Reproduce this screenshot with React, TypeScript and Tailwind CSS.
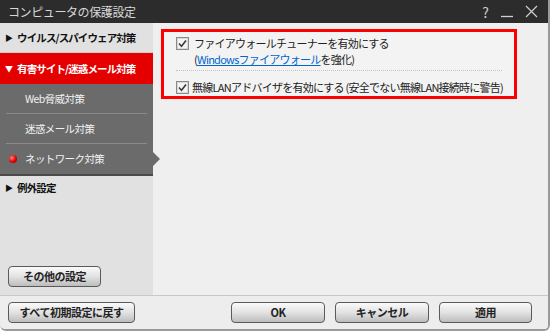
import type { ReactNode } from "react";

const jp = "font-['Noto_Sans_CJK_JP','Noto_Sans',sans-serif]";

// Checked box in the old Windows style
function CheckBox() {
	return (
		<svg width="13" height="13" viewBox="0 0 13 13" className="shrink-0">
			<rect x="0.5" y="0.5" width="12" height="12" fill="#f4f4f4" stroke="#8a8a8a" />
			<rect x="1.5" y="1.5" width="10" height="10" fill="none" stroke="#d8d8d8" />
			<path d="M3 6.5 L5.5 9.2 L10 3.5" fill="none" stroke="#3a3a3a" strokeWidth="1.6" />
		</svg>
	);
}

function Btn({ children, className }: { children: ReactNode; className?: string }) {
	return (
		<div
			className={`flex h-[21px] items-center justify-center whitespace-nowrap rounded-[4px] border border-[#5a5a5a] bg-gradient-to-b from-[#fafafa] via-[#e2e2e2] to-[#bdbdbd] text-[11px] font-bold tracking-[-0.5px] text-[#222] ${className ?? ""}`}
		>
			{children}
		</div>
	);
}

function SubItem({ label, dot, last }: { label: string; dot?: boolean; last?: boolean }) {
	return (
		<div className={`relative mx-[6px] flex h-[30px] items-center ${last ? "" : "border-b border-[#8a8a8a]"}`}>
			{dot && <span className="absolute left-[3px] h-[8px] w-[8px] rounded-full bg-[radial-gradient(circle_at_35%_35%,#ff8080,#e00000_55%,#900000)]" />}
			<span className="whitespace-nowrap pl-[19px] text-[10.5px] tracking-[-0.6px] text-[#f2f2f2]">{label}</span>
		</div>
	);
}

export default function App() {
	return (
		<div className={`flex h-[331px] w-[550px] flex-col overflow-hidden rounded-b-[6px] border-r-2 border-b-2 border-[#9a9a9a] bg-[#efefef] ${jp}`}>
			{/* Title bar */}
			<div className="flex h-[23px] shrink-0 items-center bg-[#2c2c2c] pl-[8px] pr-[10px]">
				<span className="text-[12px] tracking-[-0.4px] text-[#d8d8d8]">コンピュータの保護設定</span>
				<div className="ml-auto flex items-center gap-[12px] text-[#cfcfcf]">
					<span className="text-[14px] leading-none">?</span>
					<svg width="12" height="12" viewBox="0 0 12 12">
						<path d="M0 10.5 H12" stroke="#cfcfcf" strokeWidth="1.3" />
					</svg>
					<svg width="13" height="13" viewBox="0 0 13 13">
						<path d="M1 1 L12 12 M12 1 L1 12" stroke="#cfcfcf" strokeWidth="1.2" />
					</svg>
				</div>
			</div>

			{/* Main area */}
			<div className="flex flex-1">
				{/* Sidebar */}
				<div className="relative flex w-[153px] shrink-0 flex-col bg-[#e1e1e1]">
					<div className="flex h-[30px] items-center gap-[5px] whitespace-nowrap border-b border-[#cfcfcf] pl-[5px] text-[10.5px] font-bold tracking-[-0.9px] text-[#111]">
						<span className="text-[8px]">▶</span>
						<span>ウイルス/スパイウェア対策</span>
					</div>
					<div className="flex h-[31px] items-center gap-[5px] whitespace-nowrap bg-[#e50000] pl-[5px] text-[10.5px] font-bold tracking-[-0.9px] text-white">
						<span className="text-[8px]">▼</span>
						<span>有害サイト/迷惑メール対策</span>
					</div>
					<div className="relative border-b-2 border-[#4a4a4a] bg-[#6b6b6b]">
						<SubItem label="Web脅威対策" />
						<SubItem label="迷惑メール対策" />
						<SubItem label="ネットワーク対策" dot last />
						<span className="absolute right-[-7px] bottom-[8px] h-0 w-0 border-y-[7px] border-l-[7px] border-y-transparent border-l-[#6b6b6b]" />
					</div>
					<div className="flex h-[23px] items-center gap-[5px] pl-[5px] text-[10.5px] font-bold tracking-[-0.9px] text-[#111]">
						<span className="text-[8px]">▶</span>
						<span>例外設定</span>
					</div>
					<div className="mt-auto px-[8px] pb-[8px]">
						<Btn className="w-[93px]">その他の設定</Btn>
					</div>
				</div>

				{/* Content */}
				<div className="flex-1 pl-[8px] pt-[6px]">
					<div className="w-[356px] whitespace-nowrap border-[3px] border-[#ff0000] bg-[#f3f3f3] px-[12px] pt-[3px] pb-[1px] text-[11px] leading-[16px] tracking-[-0.75px] text-[#222]">
						<div className="flex items-start gap-[5px]">
							<div className="pt-[2px]">
								<CheckBox />
							</div>
							<div className="flex flex-col">
								<span>ファイアウォールチューナーを有効にする</span>
								<span>
									(<span className="text-[#0066cc] underline">Windowsファイアウォール</span>を強化)
								</span>
							</div>
						</div>
						<div className="mt-[3px] mb-[8px] border-t border-dotted border-[#c4c4c4]" />
						<div className="flex items-center gap-[3px]">
							<CheckBox />
							<span>無線LANアドバイザを有効にする (安全でない無線LAN接続時に警告)</span>
						</div>
					</div>
				</div>
			</div>

			{/* Bottom bar */}
			<div className="flex h-[34px] shrink-0 items-center border-t border-[#c8c8c8] bg-[#ededed] px-[8px]">
				<Btn className="w-[127px]">すべて初期設定に戻す</Btn>
				<div className="ml-auto flex gap-[10px] pr-[8px]">
					<Btn className="w-[94px]">OK</Btn>
					<Btn className="w-[94px]">キャンセル</Btn>
					<Btn className="w-[93px]">適用</Btn>
				</div>
			</div>
		</div>
	);
}
